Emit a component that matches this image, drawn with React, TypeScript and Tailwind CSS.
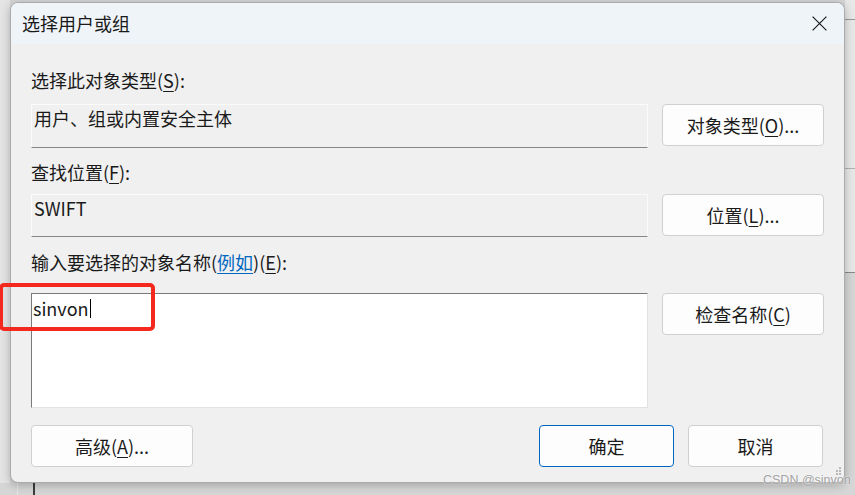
import React from 'react'

const font = "font-['Noto_Sans_CJK_SC','Noto_Sans',sans-serif]"

function Key({ k }: { k: string }) {
  return <span className="underline underline-offset-[3px] decoration-1">{k}</span>
}

function Btn({ children, primary, className = '' }: { children: React.ReactNode; primary?: boolean; className?: string }) {
  return (
    <button
      className={
        'flex h-[42px] shrink-0 items-center justify-center rounded-[4px] border bg-[#fdfdfd] text-[18px] leading-6 text-[#1a1a1a] ' +
        (primary ? 'border-[#0067c0] ' : 'border-[#d0d0d0] ') +
        className
      }
    >
      {children}
    </button>
  )
}

function ReadField({ text, className = '' }: { text: string; className?: string }) {
  return (
    <div
      className={
        'w-[617px] shrink-0 border border-[#fbfbfb] border-b-[#878787] bg-[#f0f0f0] pl-[2px] pt-[1px] text-[18px] leading-6 text-[#1a1a1a] ' +
        className
      }
    >
      {text}
    </div>
  )
}

export default function App() {
  return (
    <div className={`relative h-[495px] w-[855px] overflow-hidden bg-[#d6d6d6] ${font}`}>
      {/* desktop behind the dialog */}
      <div className="absolute left-0 top-0 h-[483px] w-[10px] bg-[#e4e4e4]" />
      <div className="absolute right-0 top-0 h-[272px] w-[10px] bg-[#e8e8e8]" />
      <div className="absolute right-0 top-[19px] h-px w-[10px] bg-[#9a9a9a]" />
      <div className="absolute right-0 top-[168px] h-px w-[10px] bg-[#b0b0b0]" />
      <div className="absolute right-0 top-[272px] h-px w-[10px] bg-[#8a8a8a]" />
      <div className="absolute left-[17px] top-[483px] h-[12px] w-px bg-[#e8e8e8]" />
      <div className="absolute left-[33px] top-[483px] h-[12px] w-[2px] bg-[#3c3c3c]" />

      {/* dialog */}
      <div className="relative ml-[10px] mt-[2px] flex h-[481px] w-[835px] flex-col overflow-hidden rounded-[8px] border border-[#ababab] bg-[#f0f0f0] shadow-[0_2px_10px_rgba(0,0,0,0.25)]">
        <div className="flex h-[41px] shrink-0 items-center justify-between bg-[#eff4f9] pl-[11px] pr-[16px]">
          <span className="-mt-[2px] text-[18px] leading-6 text-[#1a1a1a]">选择用户或组</span>
          <svg width="17" height="17" viewBox="0 0 16 16">
            <path d="M1.5 1.5 L14.5 14.5 M14.5 1.5 L1.5 14.5" stroke="#1a1a1a" strokeWidth="1.1" fill="none" />
          </svg>
        </div>

        <div className="flex flex-col pl-[20px] pr-[21px] text-[#1a1a1a]">
          <div className="mt-[24px] h-6 text-[18px] leading-6">
            选择此对象类型(<Key k="S" />):
          </div>
          <div className="mt-3 flex items-start gap-[14px]">
            <ReadField text="用户、组或内置安全主体" className="h-[44px]" />
            <Btn className="w-[162px]">
              对象类型(<Key k="O" />)...
            </Btn>
          </div>

          <div className="mt-3 h-6 text-[18px] leading-6">
            查找位置(<Key k="F" />):
          </div>
          <div className="mt-[10px] flex items-start gap-[14px]">
            <ReadField text="SWIFT" className="h-[43px]" />
            <Btn className="w-[162px]">
              位置(<Key k="L" />)...
            </Btn>
          </div>

          <div className="mt-[13px] h-6 text-[18px] leading-6">
            输入要选择的对象名称(
            <span className="text-[#0067c0] underline underline-offset-[3px] decoration-1">例如</span>)(<Key k="E" />):
          </div>
          <div className="mt-[19px] flex items-start gap-[14px]">
            <div className="flex h-[115px] w-[617px] shrink-0 items-start border border-[#e2e2e2] border-l-[#7a7a7a] border-t-[#7a7a7a] bg-white pl-[1px] pt-[2px] text-[18px] leading-6">
              <span>sinvon</span>
              <span className="ml-[1px] mt-[3px] h-[19px] w-px bg-black" />
            </div>
            <Btn className="w-[162px]">
              检查名称(<Key k="C" />)
            </Btn>
          </div>

          <div className="mt-[17px] flex items-start gap-[14px]">
            <Btn className="w-[162px]">
              高级(<Key k="A" />)...
            </Btn>
            <div className="flex-1" />
            <Btn primary className="w-[135px]">
              确定
            </Btn>
            <Btn className="w-[135px]">取消</Btn>
          </div>
        </div>
      </div>

      {/* annotation */}
      <div className="absolute left-[-1px] top-[283px] h-[48px] w-[156px] rounded-[5px] border-4 border-[#f5281e]" />

      {/* watermark and resize grip */}
      <svg width="8" height="10" viewBox="0 0 8 10" className="absolute left-[834px] top-[467px]">
        <rect x="5" y="0" width="2" height="2" fill="#b8b8b8" />
        <rect x="5" y="3" width="2" height="2" fill="#b8b8b8" />
        <rect x="2" y="3" width="2" height="2" fill="#b8b8b8" />
        <rect x="5" y="6" width="2" height="2" fill="#b8b8b8" />
        <rect x="2" y="6" width="2" height="2" fill="#b8b8b8" />
      </svg>
      <div className="absolute left-[763px] top-[472px] font-['Liberation_Sans',sans-serif] text-[12.5px] leading-4 text-[#a3a3a3] [text-shadow:0_0_2px_#ffffff]">
        CSDN @sinvon
      </div>
    </div>
  )
}
